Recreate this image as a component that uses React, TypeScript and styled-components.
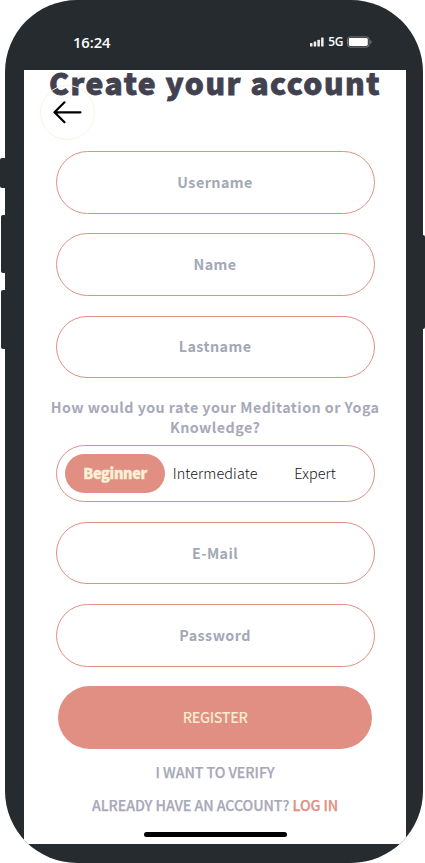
import React from "react";
import styled, { createGlobalStyle } from "styled-components";

const GlobalStyle = createGlobalStyle`
  * { box-sizing: border-box; }
  html, body { margin: 0; background: #fff; overflow: hidden; }
  button, input { font: inherit; margin: 0; }
`;

const sans = `"Source Sans Pro", "Noto Sans CJK SC", sans-serif`;
const coral = "#e18f82";

const Stage = styled.main`
  position: relative;
  width: 425px;
  height: 863px;
  padding: 0 2px 0.3px 4.5px;
  font-family: ${sans};
`;

const SideButton = styled.span<{ $side: "left" | "right"; $top: number; $height: number; $inset?: number }>`
  position: absolute;
  ${(p) => p.$side}: ${(p) => p.$inset ?? 0}px;
  top: ${(p) => p.$top}px;
  width: 8px;
  height: ${(p) => p.$height}px;
  border-radius: ${(p) => (p.$side === "left" ? "2px 0 0 2px" : "0 2px 2px 0")};
  background: #262b2f;
`;

const Phone = styled.section`
  position: relative;
  display: flex;
  flex-direction: column;
  height: 100%;
  padding: 0 16.8px 19px 19.5px;
  border-radius: 72px;
  background: #262b2f;
  overflow: hidden;
`;

const StatusBar = styled.header`
  display: flex;
  justify-content: space-between;
  align-items: center;
  flex: 0 0 70px;
  padding: 14px 34px 0 49px;
  color: #fff;
  font-family: "Open Sans", sans-serif;
`;

const Time = styled.span`
  font-size: 14.8px;
  font-weight: 600;
  letter-spacing: -0.1px;
`;

const Indicators = styled.span`
  display: flex;
  align-items: center;
  gap: 4px;
  margin-top: -1px;
`;

const Network = styled.span`
  font-size: 12px;
  font-weight: 600;
  letter-spacing: -0.3px;
`;

const Screen = styled.div`
  position: relative;
  display: flex;
  flex-direction: column;
  align-items: center;
  flex: 1;
  background: #fff;
`;

const Title = styled.h1`
  width: 382px;
  height: 81px;
  margin: 0;
  color: #414150;
  font-size: 30px;
  font-weight: 900;
  line-height: 24px;
  letter-spacing: 1.5px;
  text-align: center;
  white-space: nowrap;
  -webkit-text-stroke: 0.8px #414150;
`;

const BackButton = styled.button`
  position: absolute;
  left: 16px;
  top: 14.5px;
  display: grid;
  place-items: center;
  width: 55px;
  height: 55px;
  padding: 0;
  border: 1px solid #fdf3e0;
  border-radius: 50%;
  background: transparent;
`;

const Form = styled.form`
  display: flex;
  flex-direction: column;
  align-items: center;
  width: 319px;
`;

const Field = styled.input`
  width: 319px;
  height: 62.5px;
  margin-bottom: 19.75px;
  padding: 0 0 2px;
  border: 1px solid ${coral};
  border-radius: 32px;
  background: #fff;
  font-size: 14.3px;
  font-weight: 700;
  letter-spacing: 0.45px;
  text-align: center;
  outline: none;
  &::placeholder { color: #a2a8b6; opacity: 1; }
`;

const Question = styled.p`
  width: 340px;
  height: 47.7px;
  margin: -1px 0 1px;
  color: #a7a9b9;
  font-size: 14.3px;
  font-weight: 700;
  line-height: 20px;
  letter-spacing: 0.45px;
  text-align: center;
`;

const Levels = styled.div`
  display: grid;
  grid-template-columns: repeat(3, 100px);
  align-items: center;
  justify-content: center;
  width: 319px;
  height: 56.5px;
  margin-bottom: 20px;
  border: 1px solid ${coral};
  border-radius: 29px;
`;

const Level = styled.button<{ $active?: boolean }>`
  height: 39px;
  padding: 0 0 2px;
  border: 0;
  border-radius: 20px;
  background: ${(p) => (p.$active ? coral : "transparent")};
  color: ${(p) => (p.$active ? "#fdf0d5" : "#111")};
  font-size: 14.4px;
  font-weight: ${(p) => (p.$active ? 900 : 300)};
  letter-spacing: ${(p) => (p.$active ? "-0.3px" : "0.1px")};
  line-height: 36px;
  white-space: nowrap;
  -webkit-text-stroke: ${(p) => (p.$active ? "0.35px #fdf0d5" : "0")};
`;

const Register = styled.button`
  width: 314px;
  height: 62.5px;
  padding: 0 0 2px;
  border: 0;
  border-radius: 32px;
  background: ${coral};
  color: #fdebcf;
  font-size: 14.4px;
  font-weight: 500;
  letter-spacing: -0.4px;
`;

const Footnote = styled.p`
  height: 20px;
  margin: 14px 0 -1px;
  color: #a7a9b9;
  font-size: 14.2px;
  font-weight: 500;
  letter-spacing: -0.06px;
  line-height: 18px;
  white-space: nowrap;
  -webkit-text-stroke: 0.25px currentColor;
`;

const Accent = styled.a`
  color: ${coral};
  -webkit-text-stroke-color: ${coral};
`;

const HomeBar = styled.span`
  position: absolute;
  left: 119.5px;
  bottom: 6.5px;
  width: 143.5px;
  height: 5px;
  border-radius: 3px;
  background: #000;
`;

const Arrow = () => (
  <svg width="30" height="24" viewBox="0 0 30 24" fill="none" stroke="#000" strokeWidth="2.2" strokeLinecap="round" strokeLinejoin="round">
    <path d="M27.5 12.3H1.5M11.5 2.3L1.5 12.3l10 10" />
  </svg>
);

const Signal = () => (
  <svg width="14" height="10" viewBox="0 0 14 10" fill="#eee">
    <rect x="0" y="6" width="2.5" height="3.5" rx=".6" />
    <rect x="3.7" y="4.5" width="2.5" height="5" rx=".6" />
    <rect x="7.4" y="2.7" width="2.5" height="6.8" rx=".6" />
    <rect x="11.1" y=".5" width="2.5" height="9" rx=".6" />
  </svg>
);

const Battery = () => (
  <svg width="25" height="12" viewBox="0 0 25 12">
    <rect x=".5" y=".9" width="21.6" height="10.2" rx="2.6" fill="none" stroke="#777b7e" />
    <rect x="1.8" y="2.1" width="19" height="7.8" rx="1.4" fill="#fff" />
    <path d="M23.3 4v4q1.3-.6 1.3-2t-1.3-2z" fill="#777b7e" />
  </svg>
);

export default function App() {
  return (
    <>
      <GlobalStyle />
      <Stage>
        <SideButton $side="left" $top={158} $height={30} />
        <SideButton $side="left" $top={215} $height={58} $inset={1} />
        <SideButton $side="left" $top={290} $height={58.5} $inset={1} />
        <SideButton $side="right" $top={235} $height={93.5} />
        <Phone>
          <StatusBar>
            <Time>16:24</Time>
            <Indicators>
              <Signal />
              <Network>5G</Network>
              <Battery />
            </Indicators>
          </StatusBar>
          <Screen>
            <Title>Create your account</Title>
            <BackButton type="button" aria-label="Back"><Arrow /></BackButton>
            <Form>
              <Field placeholder="Username" />
              <Field placeholder="Name" />
              <Field placeholder="Lastname" />
              <Question>How would you rate your Meditation or Yoga Knowledge?</Question>
              <Levels>
                <Level type="button" $active>Beginner</Level>
                <Level type="button">Intermediate</Level>
                <Level type="button">Expert</Level>
              </Levels>
              <Field placeholder="E-Mail" />
              <Field placeholder="Password" type="password" />
              <Register type="button">REGISTER</Register>
              <Footnote>I WANT TO VERIFY</Footnote>
              <Footnote>ALREADY HAVE AN ACCOUNT? <Accent>LOG IN</Accent></Footnote>
            </Form>
            <HomeBar />
          </Screen>
        </Phone>
      </Stage>
    </>
  );
}
